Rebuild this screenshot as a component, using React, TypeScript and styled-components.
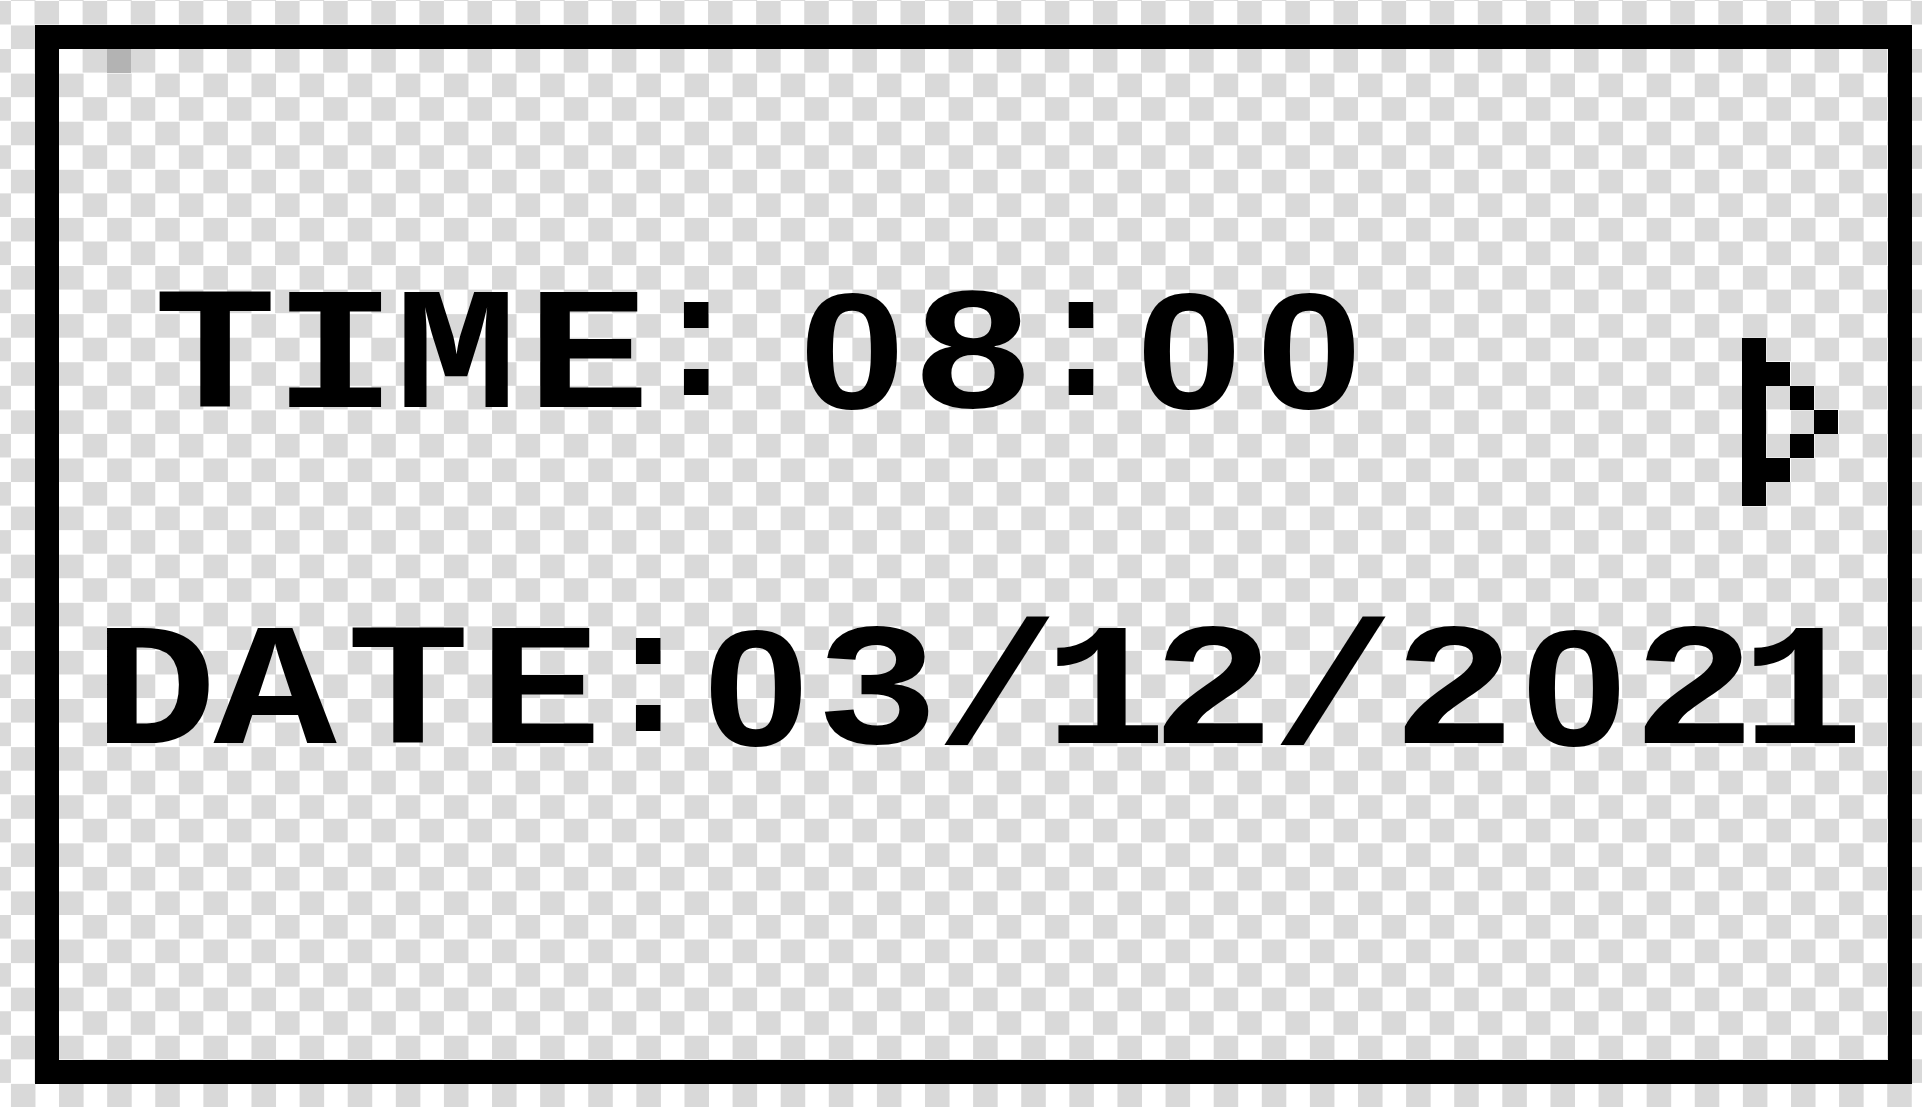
import React from "react";
import styled, { createGlobalStyle, css } from "styled-components";

const P = 24.06; // size of one LCD pixel

const GlobalStyle = createGlobalStyle`
  html, body {
    margin: 0;
    padding: 0;
    overflow: hidden;
  }
  body {
    font-family: "Liberation Mono", "DejaVu Sans Mono", monospace;
  }
`;

const Page = styled.div`
  width: 100vw;
  height: 100vh;
  box-sizing: border-box;
  padding: 25px 0 0 35px;
  background-color: #ffffff;
  background-image: repeating-conic-gradient(#d9d9d9 0 25%, #ffffff 0 50%);
  background-size: ${2 * P}px ${2 * P}px;
  background-position: ${35 - P}px ${25 - P}px;
`;

const Screen = styled.div`
  width: ${76 * P}px;
  height: ${42 * P}px;
  border: ${P}px solid #000000;
  display: grid;
  grid-template-columns: repeat(76, ${P}px);
  grid-template-rows: repeat(42, ${P}px);
`;

const DeadPixel = styled.div<{ $col: number; $row: number }>`
  grid-column: ${(p) => p.$col} / span 1;
  grid-row: ${(p) => p.$row} / span 1;
  background: #b3b3b3;
`;

const Readout = styled.div`
  display: contents;
`;

type Kind = "mono" | "round" | "colon";

const kindStyles: Record<Kind, ReturnType<typeof css>> = {
  mono: css`
    font-family: "Liberation Mono", "DejaVu Sans Mono", monospace;
    font-size: 174px;
    padding-top: 0.127em;
    letter-spacing: -0.2em;
    transform: scaleX(1.18) translateX(-0.1em);
  `,
  colon: css`
    font-family: "Liberation Mono", "DejaVu Sans Mono", monospace;
    font-size: 174px;
    padding-top: 0.127em;
    letter-spacing: -0.2em;
    transform: translateY(-0.07em) translateX(-0.1em);
  `,
  round: css`
    font-family: "Liberation Sans", Arial, sans-serif;
    font-size: 166px;
    padding-top: 0.02em;
    letter-spacing: -0.15em;
    transform: scaleX(1.14) translateX(-0.075em);
  `,
};

const Glyph = styled.span<{ $col: number; $row: number; $span: number; $kind: Kind }>`
  grid-column: ${(p) => p.$col} / span ${(p) => p.$span};
  grid-row: ${(p) => p.$row} / span 5;
  display: flex;
  justify-content: center;
  align-items: center;
  box-sizing: border-box;
  white-space: pre;
  font-weight: 700;
  line-height: 1;
  color: #000000;
  ${(p) => kindStyles[p.$kind]}
`;

const Cursor = styled.svg<{ $col: number; $row: number }>`
  grid-column: ${(p) => p.$col} / span 4;
  grid-row: ${(p) => p.$row} / span 7;
  width: 100%;
  height: 100%;
  display: block;
`;

type G = [string, number, number]; // char, start column (j), width in pixels

const timeLine: G[] = [
  ["T", 6, 5],
  ["I", 12, 3],
  ["M", 16, 5],
  ["E", 22, 4],
  [":", 28, 1],
  [" ", 30, 2],
  ["0", 33, 4],
  ["8", 38, 4],
  [":", 44, 1],
  ["0", 47, 4],
  ["0", 52, 4],
];

const dateLine: G[] = [
  ["D", 4, 4],
  ["A", 9, 4],
  ["T", 14, 5],
  ["E", 20, 4],
  [":", 26, 1],
  ["0", 29, 4],
  ["3", 34, 4],
  ["/", 39, 4],
  ["1", 44, 3],
  ["2", 48, 4],
  ["/", 53, 4],
  ["2", 58, 4],
  ["0", 63, 4],
  ["2", 68, 4],
  ["1", 73, 3],
];

const kindOf = (ch: string): Kind => (ch === "0" ? "round" : ch === ":" ? "colon" : "mono");

const Line: React.FC<{ glyphs: G[]; row: number; label: string }> = ({ glyphs, row, label }) => (
  <Readout aria-label={label}>
    {glyphs.map(([ch, j, w], i) => (
      <Glyph key={i} $col={j - 1} $row={row - 1} $span={w} $kind={kindOf(ch)}>
        {ch}
      </Glyph>
    ))}
  </Readout>
);

export default function App() {
  return (
    <>
      <GlobalStyle />
      <Page>
        <Screen>
          <DeadPixel $col={3} $row={1} />
          <Line glyphs={timeLine} row={12} label="TIME: 08:00" />
          <Line glyphs={dateLine} row={26} label="DATE:03/12/2021" />
          <Cursor $col={71} $row={13} viewBox="0 0 4 7" shapeRendering="crispEdges" preserveAspectRatio="none">
            <path
              fill="#000"
              d="M0 0h1v7H0z M1 1h1v1H1z M2 2h1v1H2z M3 3h1v1H3z M2 4h1v1H2z M1 5h1v1H1z"
            />
          </Cursor>
        </Screen>
      </Page>
    </>
  );
}
